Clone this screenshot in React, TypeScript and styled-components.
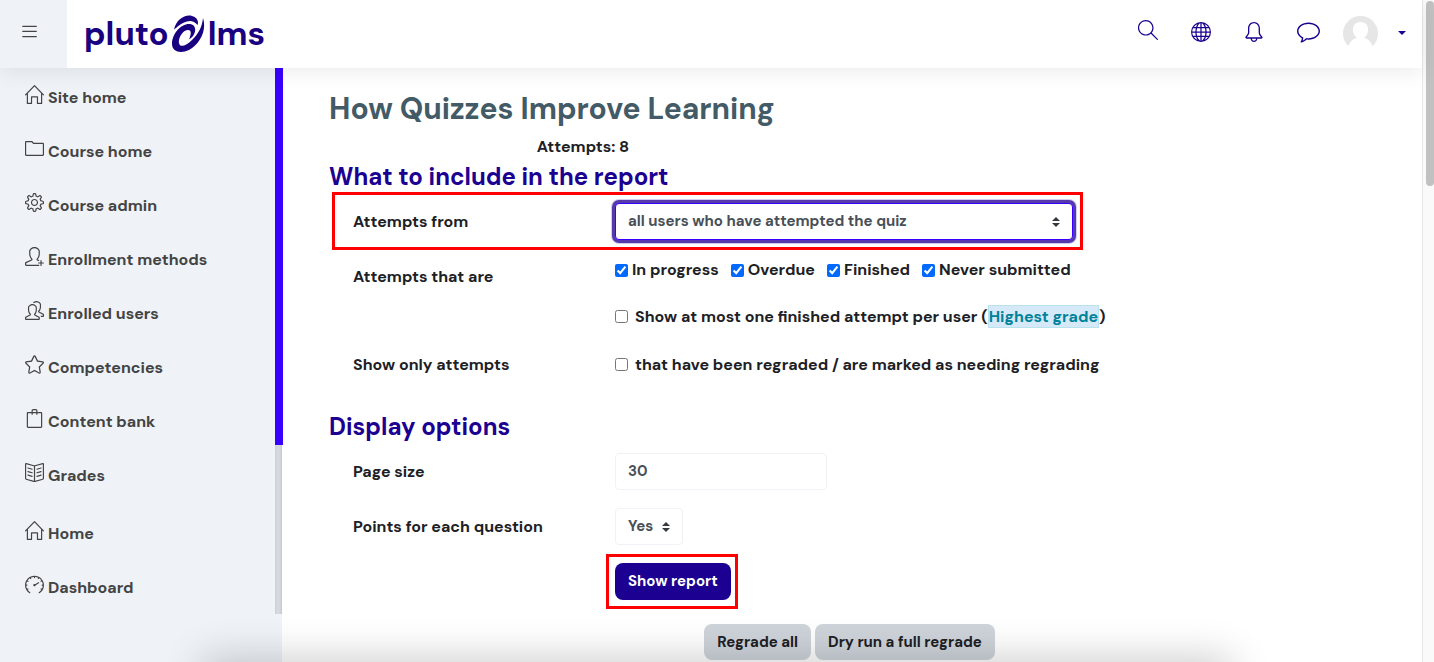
import React from "react";
import styled, { createGlobalStyle, css } from "styled-components";
import {
  SlHome, SlFolder, SlSettings, SlUserFollow, SlPeople, SlStar, SlBag, SlBookOpen,
  SlSpeedometer, SlMagnifier, SlBell, SlBubble, SlMenu,
} from "react-icons/sl";
import { BsGlobe } from "react-icons/bs";

const navy = "#1b0091";
const violet = "#3800ff";
const mist = "#eff3f8";

const GlobalStyle = createGlobalStyle`
  *, *::before, *::after { box-sizing: border-box; }
  body {
    margin: 0;
    background: #fff;
    color: #1d2125;
    font: 700 16px/24px "DM Sans", "Noto Sans", sans-serif;
  }
  button, input, select { font: inherit; color: inherit; }
`;

const Window = styled.div`
  position: relative;
  display: flex;
  height: 100vh;
  overflow: hidden;
`;

const Page = styled.div`
  flex: 1;
  min-width: 0;
  display: flex;
  flex-direction: column;
`;

const Header = styled.header`
  position: relative;
  z-index: 2;
  flex: none;
  display: flex;
  align-items: center;
  height: 68px;
  background: #fff;
  box-shadow: 0 4px 20px rgba(0, 0, 0, 0.08);
`;

const MenuButton = styled.button`
  display: flex;
  align-items: center;
  justify-content: center;
  width: 67px;
  height: 68px;
  padding: 0 8px 6px 0;
  border: 0;
  background: ${mist};
  color: #444;
  font-size: 15px;
`;

const Logo = styled.a`
  display: flex;
  align-items: center;
  margin-left: 17px;
  color: #190080;
  font-size: 33px;
  line-height: 40px;
  text-decoration: none;
  svg { display: block; margin: 0 2px 0 3px; }
`;

const Tools = styled.div`
  display: flex;
  align-items: center;
  gap: 33px;
  height: 64px;
  margin: 0 0 4px auto;
  padding-right: 16px;
  color: ${navy};
`;

const ToolButton = styled.button<{ $size?: number; $raised?: boolean }>`
  display: flex;
  padding: ${(p) => (p.$raised ? "0 0 4px" : "0")};
  border: 0;
  background: none;
  font-size: ${(p) => p.$size ?? 20}px;
`;

const UserButton = styled.button`
  display: flex;
  align-items: center;
  gap: 20px;
  margin-left: -10px;
  padding: 2px 0 0;
  border: 0;
  background: none;
`;

const Body = styled.div`
  flex: 1;
  min-height: 0;
  display: flex;
`;

const Sidebar = styled.aside`
  flex: none;
  width: 283px;
  padding-bottom: 48px;
  display: flex;
  background: linear-gradient(to right, ${mist} 282px, #fff 282px);
`;

const Nav = styled.nav`
  flex: 1;
  padding-top: 3px;
`;

const NavList = styled.ul`
  margin: 0 0 4px;
  padding: 0;
  list-style: none;
`;

const NavLink = styled.a`
  display: flex;
  align-items: center;
  gap: 4px;
  height: 54px;
  padding-left: 25px;
  color: #444;
  text-decoration: none;
  svg { flex: none; margin-bottom: 7px; font-size: 19px; }
`;

const SideTrack = styled.div`
  width: 8px;
  background: linear-gradient(to right, #ccd1d5, #d7dbdf 3px, #d3d7db 5px, #c5c9cd 7px, #fff 7px);
`;

const SideThumb = styled.div`
  height: 69%;
  background: ${violet};
`;

const Main = styled.main`
  flex: 1;
  min-width: 0;
  padding: 22px 52px 0 46px;
`;

const Title = styled.h1`
  margin: 0;
  color: #435b66;
  font-size: 30px;
  line-height: 38px;
`;

const Summary = styled.p`
  max-width: 508px;
  margin: 7px 0 0;
  text-align: center;
`;

const SectionTitle = styled.h2<{ $spaced?: boolean }>`
  margin: ${(p) => (p.$spaced ? "29px 0 11px" : "3px 0 11px")};
  color: ${navy};
  font-size: 24px;
  line-height: 30px;
`;

const Row = styled.div<{ $gap?: number }>`
  position: relative;
  display: grid;
  grid-template-columns: 262px 1fr;
  align-items: center;
  min-height: 37px;
  margin: 0 0 ${(p) => p.$gap ?? 18}px;
  padding-left: 24px;
`;

const Field = styled.div<{ $top?: boolean }>`
  grid-column: 2;
  display: flex;
  align-items: center;
  align-self: ${(p) => (p.$top ? "start" : "center")};
`;

const Outline = styled.span<{ $wide?: boolean }>`
  position: absolute;
  border: 3px solid #f00;
  pointer-events: none;
  ${(p) =>
    p.$wide
      ? css`inset: -11px auto -10px 3px; width: 751px;`
      : css`inset: -9px -7px -9px -9px;`}
`;

const fieldBox = css`
  height: 37px;
  border: 1px solid ${mist};
  border-radius: 4px;
  background: #fff;
  color: #495057;
  font-size: 15px;
  padding: 0 12px 1px;
`;

const TextInput = styled.input`
  ${fieldBox}
  width: 212px;
`;

const SelectWrap = styled.div`
  position: relative;
  display: flex;
  svg { position: absolute; right: 13px; top: 14px; pointer-events: none; }
`;

const Select = styled.select<{ $focused?: boolean }>`
  ${fieldBox}
  appearance: none;
  padding-right: 28px;
  outline: 0;
  ${(p) =>
    p.$focused &&
    css`
      width: 458px;
      border-color: ${violet};
      box-shadow: 0 0 0 3px #5639ad, 0 0 0 4px #d3cdf0;
    `}
`;

const Check = styled.label<{ $loose?: boolean }>`
  display: flex;
  align-items: center;
  gap: ${(p) => (p.$loose ? 7 : 4)}px;
  margin-right: 12px;
  white-space: nowrap;
  input { width: 13px; height: 13px; margin: 0; accent-color: #0069ff; }
`;

const GradeMark = styled.span`
  border: 1px solid #b8e3ee;
  background: #d6e9f8;
  color: #00829b;
`;

const ButtonHolder = styled.div`
  position: relative;
  display: flex;
`;

const Button = styled.button<{ $primary?: boolean }>`
  height: ${(p) => (p.$primary ? 37 : 36)}px;
  padding: 0 13px 1px;
  border: 0;
  border-radius: 8px;
  background: ${(p) => (p.$primary ? navy : "#ced4da")};
  color: ${(p) => (p.$primary ? "#fff" : "#1d2125")};
  font-size: 15px;
`;

const Actions = styled.div`
  display: flex;
  justify-content: center;
  gap: 4px;
  margin-top: 24px;
`;

const PageTrack = styled.div`
  flex: none;
  width: 12px;
  padding: 1px 0 0 3px;
  border-left: 1px solid #e8e8e8;
  background: #fafafa;
`;

const PageThumb = styled.div`
  height: 28%;
  border-radius: 4px;
  background: #c1c1c1;
`;

const BottomShade = styled.div`
  position: absolute;
  z-index: 3;
  left: 206px;
  right: 206px;
  top: 100%;
  height: 40px;
  box-shadow: 0 0 40px 4px rgba(0, 0, 0, 0.2);
  pointer-events: none;
`;

const Swirl = () => (
  <svg width="34" height="38" viewBox="0 0 34 38" aria-hidden="true">
    <path
      d="M2 14.500C4 5 13-1 20 1C25 2.500 27 6 25.500 10C22 5.500 17 5 12 7.500C8 9.500 5 12 2 14.500Z"
      fill="currentColor"
    />
    <path
      fillRule="evenodd"
      d="M31 3C35 15 28 29 17 35C9 39 0 37 0 29C0 18 10 8 18 9C26 10 24 21 17 24.500C19 20 20 15 16 15C11 15 6 23 7 28C8 33 14 31 20 25C27 18 30 12 31 3Z"
      fill="currentColor"
    />
  </svg>
);

const Avatar = () => (
  <svg width="35" height="35" viewBox="0 0 35 35" aria-hidden="true">
    <circle cx="17.500" cy="17.500" r="17.500" fill="#e6e6e6" />
    <path
      d="M17.500 6C12 6 9.500 10 10 14.500C10.300 18 11.500 20 14 22C9 23 7 26 5.500 30L4 35H31L29.500 30C28 26 26 23 21 22C23.500 20 24.700 18 25 14.500C25.500 10 23 6 17.500 6Z"
      fill="#fff"
    />
  </svg>
);

const Caret = () => (
  <svg width="8" height="4" viewBox="0 0 8 4" aria-hidden="true">
    <path d="M0 0H8L4 4Z" fill="currentColor" />
  </svg>
);

const Sorter = () => (
  <svg width="8" height="10" viewBox="0 0 8 10" aria-hidden="true">
    <path d="M4 0L8 4H0ZM4 10L0 6H8Z" fill="#343a40" />
  </svg>
);

const courseLinks = [
  { label: "Site home", Icon: SlHome },
  { label: "Course home", Icon: SlFolder },
  { label: "Course admin", Icon: SlSettings },
  { label: "Enrollment methods", Icon: SlUserFollow },
  { label: "Enrolled users", Icon: SlPeople },
  { label: "Competencies", Icon: SlStar },
  { label: "Content bank", Icon: SlBag },
  { label: "Grades", Icon: SlBookOpen },
];

const siteLinks = [
  { label: "Home", Icon: SlHome },
  { label: "Dashboard", Icon: SlSpeedometer },
];

const states = ["In progress", "Overdue", "Finished", "Never submitted"];

const Links = ({ items }: { items: typeof courseLinks }) => (
  <NavList>
    {items.map(({ label, Icon }) => (
      <li key={label}>
        <NavLink href="#">
          <Icon />
          {label}
        </NavLink>
      </li>
    ))}
  </NavList>
);

export default function App() {
  return (
    <Window>
      <GlobalStyle />
      <Page>
        <Header>
          <MenuButton aria-label="Menu"><SlMenu /></MenuButton>
          <Logo href="#">pluto<Swirl />lms</Logo>
          <Tools>
            <ToolButton aria-label="Search" $raised><SlMagnifier /></ToolButton>
            <ToolButton aria-label="Language"><BsGlobe /></ToolButton>
            <ToolButton aria-label="Notifications"><SlBell /></ToolButton>
            <ToolButton aria-label="Messages" $size={23}><SlBubble /></ToolButton>
            <UserButton aria-label="User menu"><Avatar /><Caret /></UserButton>
          </Tools>
        </Header>
        <Body>
          <Sidebar>
            <Nav>
              <Links items={courseLinks} />
              <Links items={siteLinks} />
            </Nav>
            <SideTrack><SideThumb /></SideTrack>
          </Sidebar>
          <Main>
            <Title>How Quizzes Improve Learning</Title>
            <Summary>Attempts: 8</Summary>
            <SectionTitle>What to include in the report</SectionTitle>
            <Row>
              <label htmlFor="from">Attempts from</label>
              <Field>
                <SelectWrap>
                  <Select id="from" $focused>
                    <option>all users who have attempted the quiz</option>
                  </Select>
                  <Sorter />
                </SelectWrap>
              </Field>
              <Outline $wide />
            </Row>
            <Row $gap={3}>
              <span>Attempts that are</span>
              <Field $top>
                {states.map((s) => (
                  <Check key={s}>
                    <input type="checkbox" defaultChecked />
                    {s}
                  </Check>
                ))}
              </Field>
            </Row>
            <Row $gap={11}>
              <Field>
                <Check $loose>
                  <input type="checkbox" />
                  <span>Show at most one finished attempt per user (<GradeMark>Highest grade</GradeMark>)</span>
                </Check>
              </Field>
            </Row>
            <Row>
              <span>Show only attempts</span>
              <Field>
                <Check $loose>
                  <input type="checkbox" />
                  that have been regraded / are marked as needing regrading
                </Check>
              </Field>
            </Row>
            <SectionTitle $spaced>Display options</SectionTitle>
            <Row>
              <label htmlFor="size">Page size</label>
              <Field><TextInput id="size" defaultValue="30" /></Field>
            </Row>
            <Row>
              <label htmlFor="points">Points for each question</label>
              <Field>
                <SelectWrap>
                  <Select id="points"><option>Yes</option></Select>
                  <Sorter />
                </SelectWrap>
              </Field>
            </Row>
            <Row>
              <Field>
                <ButtonHolder>
                  <Button $primary>Show report</Button>
                  <Outline />
                </ButtonHolder>
              </Field>
            </Row>
            <Actions>
              <Button>Regrade all</Button>
              <Button>Dry run a full regrade</Button>
            </Actions>
          </Main>
        </Body>
      </Page>
      <PageTrack><PageThumb /></PageTrack>
      <BottomShade />
    </Window>
  );
}
